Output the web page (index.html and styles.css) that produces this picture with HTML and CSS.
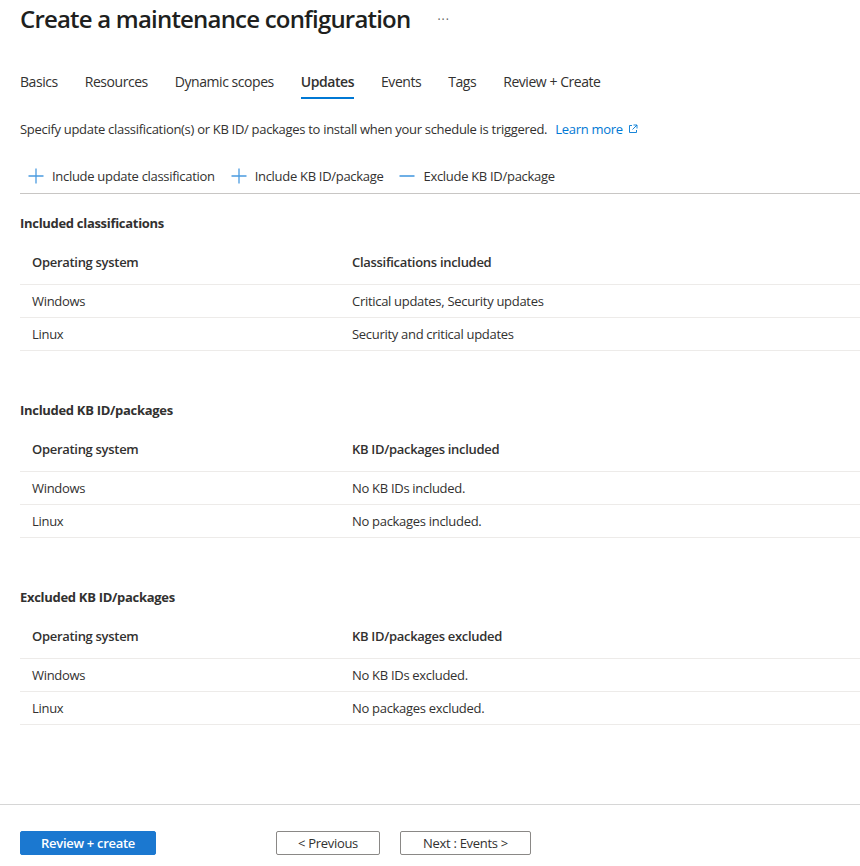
FILE: index.html
```html
<!DOCTYPE html>
<html lang="en">
<head>
<meta charset="utf-8">
<title>Create a maintenance configuration</title>
<link rel="stylesheet" href="styles.css">
</head>
<body>
<div class="app">
  <main class="main">
    <header class="title-bar">
      <h1 class="title">Create a maintenance configuration</h1>
      <span class="more">···</span>
    </header>

    <nav class="tabs">
      <span class="tab">Basics</span>
      <span class="tab">Resources</span>
      <span class="tab">Dynamic scopes</span>
      <span class="tab active">Updates</span>
      <span class="tab">Events</span>
      <span class="tab">Tags</span>
      <span class="tab">Review + Create</span>
    </nav>

    <p class="desc">Specify update classification(s) or KB ID/ packages to install when your schedule is triggered.
      <a class="link">Learn more<svg class="ext" width="10" height="10" viewBox="0 0 10 10"><path d="M4 1.5H1.5v7h7V6" fill="none" stroke="#0078d4" stroke-width="0.9"/><path d="M5.5 1H9v3.5M9 1L4.5 5.5" fill="none" stroke="#0078d4" stroke-width="0.9"/></svg></a>
    </p>

    <div class="toolbar">
      <span class="tool"><svg width="16" height="16" viewBox="0 0 16 16"><path d="M8 0.5v15M0.5 8h15" stroke="#4a9be0" stroke-width="1.3" fill="none"/></svg>Include update classification</span>
      <span class="tool"><svg width="16" height="16" viewBox="0 0 16 16"><path d="M8 0.5v15M0.5 8h15" stroke="#4a9be0" stroke-width="1.3" fill="none"/></svg>Include KB ID/package</span>
      <span class="tool"><svg width="16" height="16" viewBox="0 0 16 16"><path d="M0.5 8h15" stroke="#4a9be0" stroke-width="1.6" fill="none"/></svg>Exclude KB ID/package</span>
    </div>

    <section class="section">
      <h2 class="section-title">Included classifications</h2>
      <div class="table">
        <div class="row head"><span class="cell c1">Operating system</span><span class="cell">Classifications included</span></div>
        <div class="row"><span class="cell c1">Windows</span><span class="cell">Critical updates, Security updates</span></div>
        <div class="row"><span class="cell c1">Linux</span><span class="cell">Security and critical updates</span></div>
      </div>
    </section>

    <section class="section">
      <h2 class="section-title">Included KB ID/packages</h2>
      <div class="table">
        <div class="row head"><span class="cell c1">Operating system</span><span class="cell">KB ID/packages included</span></div>
        <div class="row"><span class="cell c1">Windows</span><span class="cell">No KB IDs included.</span></div>
        <div class="row"><span class="cell c1">Linux</span><span class="cell">No packages included.</span></div>
      </div>
    </section>

    <section class="section">
      <h2 class="section-title">Excluded KB ID/packages</h2>
      <div class="table">
        <div class="row head"><span class="cell c1">Operating system</span><span class="cell">KB ID/packages excluded</span></div>
        <div class="row"><span class="cell c1">Windows</span><span class="cell">No KB IDs excluded.</span></div>
        <div class="row"><span class="cell c1">Linux</span><span class="cell">No packages excluded.</span></div>
      </div>
    </section>
  </main>

  <footer class="footer">
    <button class="btn primary">Review + create</button>
    <button class="btn secondary prev">&lt; Previous</button>
    <button class="btn secondary next">Next : Events &gt;</button>
  </footer>
</div>
</body>
</html>
```

FILE: styles.css
```css
* { box-sizing: border-box; }
html, body { margin: 0; padding: 0; background: #fff; }
body {
  font-family: "Open Sans", "Noto Sans", "Liberation Sans", sans-serif;
  color: #323130;
  font-size: 13px;
  letter-spacing: -0.3px;
}
.app {
  min-height: 100vh;
  display: flex;
  flex-direction: column;
}
.main {
  flex: 1;
  padding-left: 20px;
}
.title-bar {
  display: flex;
  align-items: center;
  height: 38px;
}
.title {
  margin: 0;
  font-size: 24px;
  font-weight: 600;
  color: #201f1e;
  line-height: 32px;
  letter-spacing: -0.8px;
}
.more {
  margin-left: 27px;
  font-size: 12px;
  color: #605e5c;
  letter-spacing: 1px;
}
.tabs {
  display: flex;
  gap: 27px;
  margin-top: 34px;
  height: 28px;
  font-size: 14px;
  letter-spacing: -0.45px;
}
.tab {
  position: relative;
  line-height: 20px;
  height: 28px;
  color: #323130;
}
.tab.active {
  font-weight: 600;
}
.tab.active::after {
  content: "";
  position: absolute;
  left: 0;
  right: 0;
  top: 25px;
  height: 2px;
  background: #0078d4;
}
.desc {
  margin: 0;
  margin-top: 19px;
  line-height: 20px;
}
.link {
  color: #0078d4;
  margin-left: 5px;
}
.ext { margin-left: 5px; vertical-align: 0; }
.toolbar {
  display: flex;
  margin-top: 26px;
  height: 29px;
  border-bottom: 1px solid #c8c6c4;
  align-items: flex-start;
}
.tool {
  display: flex;
  align-items: center;
  gap: 8px;
  padding: 0 8px;
  height: 22px;
  line-height: 20px;
}
.section-title {
  margin: 19px 0 0;
  font-size: 13px;
  font-weight: 700;
  line-height: 20px;
  color: #323130;
}
.section + .section .section-title { margin-top: 49px; }
.row {
  display: flex;
  height: 33px;
  align-items: center;
  border-bottom: 1px solid #edebe9;
}
.row.head {
  height: 52px;
  padding-top: 6px;
  font-weight: 600;
}
.cell {
  padding-left: 12px;
  line-height: 20px;
}
.c1 { width: 320px; }
.footer {
  height: 62px;
  border-top: 1px solid #d6d6d6;
  padding: 26px 0 0 20px;
  display: flex;
  align-items: flex-start;
}
.btn {
  font-family: inherit;
  font-size: 13px;
  letter-spacing: -0.3px;
  height: 24px;
  padding: 0;
  border-radius: 2px;
  cursor: pointer;
  line-height: 20px;
}
.primary {
  width: 136px;
  background: #1b78d0;
  border: 1px solid #1b78d0;
  color: #fff;
  font-weight: 600;
}
.secondary {
  background: #fff;
  border: 1px solid #8a8886;
  color: #323130;
}
.prev { width: 104px; margin-left: 120px; }
.next { width: 131px; margin-left: 20px; }
```
